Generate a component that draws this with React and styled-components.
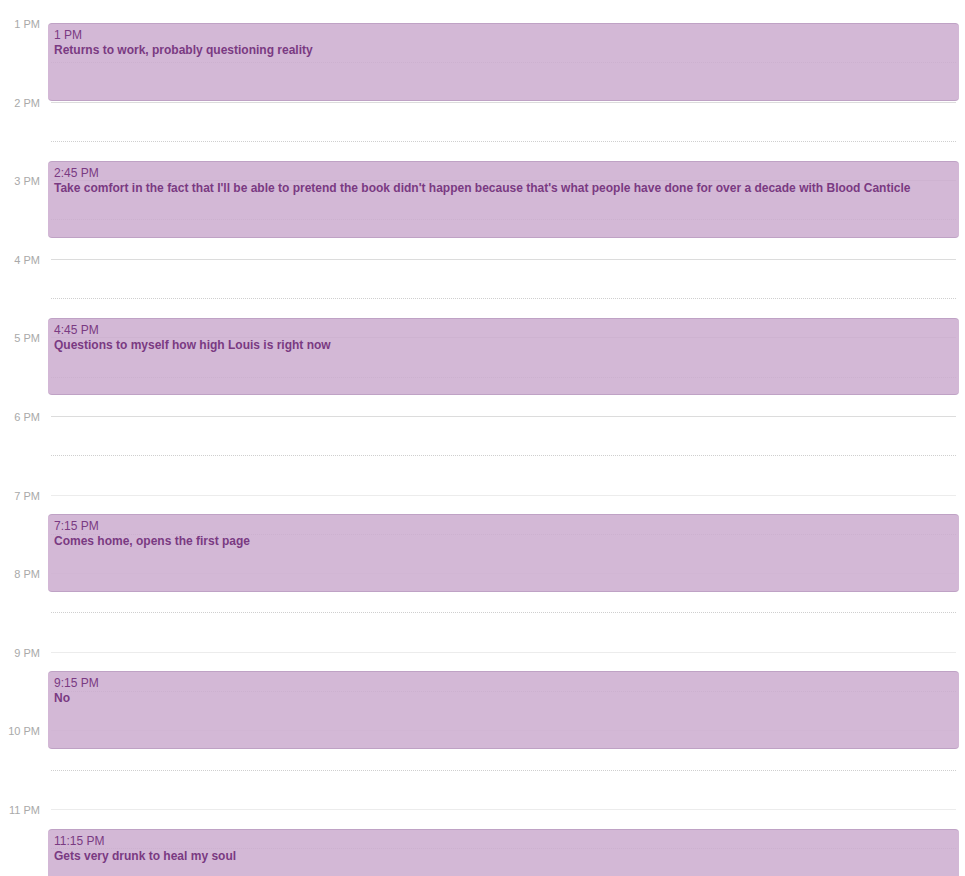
import React from "react";
import styled, { createGlobalStyle } from "styled-components";

const SLOT = 39.3;
const HOUR = SLOT * 2;

const GlobalStyle = createGlobalStyle`
  html, body {
    margin: 0;
    padding: 0;
    background: #ffffff;
    font-family: "Liberation Sans", Arial, Helvetica, sans-serif;
  }
`;

const Calendar = styled.div`
  position: relative;
  padding-top: 23px;
`;

const Row = styled.div`
  display: flex;
  height: ${SLOT}px;
`;

const Axis = styled.div`
  width: 48px;
  flex: none;
  box-sizing: border-box;
  padding-right: 8px;
  text-align: right;
`;

const Label = styled.div`
  margin-top: -5px;
  font-size: 11px;
  line-height: 12px;
  color: #a9a9a9;
  white-space: nowrap;
`;

const Line = styled.div`
  flex: 1;
  margin-left: 3px;
  margin-right: 9px;
  border-top: 1px ${(p) => (p.$half ? "dotted" : "solid")}
    ${(p) => (p.$half ? "#cfcfcf" : p.$faint ? "#ececec" : "#dcdcdc")};
`;

const EventLayer = styled.div`
  position: absolute;
  top: 23px;
  left: 48px;
  right: 6px;
  bottom: 0;
  pointer-events: none;
`;

const Event = styled.div`
  position: absolute;
  left: 0;
  right: 0;
  box-sizing: border-box;
  height: ${HOUR - 1}px;
  padding: 4px 6px;
  border-top: 1px solid rgba(190, 160, 195, 0.9);
  border-bottom: 1px solid rgba(190, 160, 195, 0.9);
  border-radius: 4px;
  background: rgba(204, 172, 207, 0.86);
  color: #7a3a82;
  font-size: 12px;
  line-height: 15px;
  overflow: hidden;
`;

const EventTime = styled.div`
  font-weight: normal;
  white-space: nowrap;
`;

const EventTitle = styled.div`
  font-weight: bold;
  white-space: nowrap;
`;

const hours = ["1", "2", "3", "4", "5", "6", "7", "8", "9", "10", "11", "12"];

const events = [
  { start: 13, time: "1 PM", title: "Returns to work, probably questioning reality" },
  {
    start: 14.75,
    time: "2:45 PM",
    title:
      "Take comfort in the fact that I'll be able to pretend the book didn't happen because that's what people have done for over a decade with Blood Canticle",
  },
  { start: 16.75, time: "4:45 PM", title: "Questions to myself how high Louis is right now" },
  { start: 19.25, time: "7:15 PM", title: "Comes home, opens the first page" },
  { start: 21.25, time: "9:15 PM", title: "No" },
  { start: 23.25, time: "11:15 PM", title: "Gets very drunk to heal my soul" },
];

export default function App() {
  return (
    <>
      <GlobalStyle />
      <Calendar>
        {hours.map((h, i) => (
          <React.Fragment key={h}>
            <Row>
              <Axis>
                <Label>{h === "12" ? "12 AM" : `${h} PM`}</Label>
              </Axis>
              <Line $faint={i >= 6} />
            </Row>
            <Row>
              <Axis />
              <Line $half />
            </Row>
          </React.Fragment>
        ))}
        <EventLayer>
          {events.map((e) => (
            <Event key={e.time} style={{ top: `${(e.start - 13) * HOUR}px` }}>
              <EventTime>{e.time}</EventTime>
              <EventTitle>{e.title}</EventTitle>
            </Event>
          ))}
        </EventLayer>
      </Calendar>
    </>
  );
}
